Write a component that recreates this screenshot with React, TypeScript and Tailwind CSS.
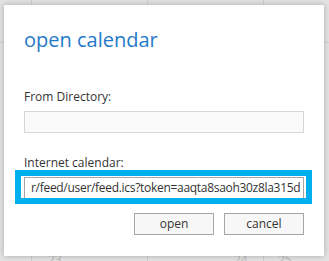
const days = [
  { w: 'w-[31px]', n: '', pad: 'pl-0' },
  { w: 'w-[116px]', n: '23', pad: 'pl-[16px]' },
  { w: 'w-[116px]', n: '24', pad: 'pl-[86px]' },
  { w: 'flex-1', n: '25', pad: 'pl-[14px]' },
];

export default function App() {
  return (
    <div className="relative w-[329px] h-[261px] overflow-hidden bg-[#e3e3e3] font-['Open_Sans',sans-serif]">
      {/* calendar behind the dialog */}
      <div className="flex flex-col h-full">
        <div className="h-[43px] border-b border-[#d2d2d2] flex">
          {days.map((d, i) => (
            <div key={i} className={`${d.w} h-full ${i > 0 ? 'border-l border-[#cfcfcf]' : ''}`} />
          ))}
        </div>
        <div className="flex-1 flex">
          {days.map((d, i) => (
            <div key={i} className={`${d.w} h-full flex flex-col justify-end ${d.pad} ${i > 0 ? 'border-l border-[#cfcfcf]' : ''}`}>
              <span className="text-[12px] leading-[12px] text-[#b8b8b8] translate-y-[5px]">{d.n}</span>
            </div>
          ))}
        </div>
      </div>

      <div className="absolute left-[4px] top-[5px] w-[320px] h-[251px] bg-white shadow-[0_0_6px_rgba(0,0,0,0.25)] px-5 pt-[21px]">
        <h1 className="text-[20px] leading-[28px] text-[#1f7ac9] font-normal">open calendar</h1>

        <div className="mt-[34px] text-[12px] leading-[18px] text-[#333]">From Directory:</div>
        <div className="mt-[5px] h-[22px] w-[280px] border border-[#d6d6d6] bg-[#fafafa]" />

        <div className="mt-[21px] text-[12px] leading-[18px] text-[#333]">Internet calendar:</div>
        <div className="relative mt-[5px]">
          <div className="h-[22px] w-[280px] border border-[#a6a6a6] bg-white pl-[6px] text-[12px] leading-[20px] tracking-[-0.3px] text-[#333] whitespace-nowrap overflow-hidden">
            r/feed/user/feed.ics?token=aaqta8saoh30z8la315d
          </div>
          <div className="absolute left-[-9px] top-[-7px] w-[297px] h-[34px] border-[6px] border-[#00b0ee]" />
        </div>

        <div className="mt-[14px] flex justify-end gap-[10px] w-[280px]">
          <button className="h-[22px] w-[80px] border border-[#a6a6a6] bg-[#f7f7f7] text-[12px] leading-[20px] text-[#333]">open</button>
          <button className="h-[22px] w-[80px] border border-[#a6a6a6] bg-[#f7f7f7] text-[12px] leading-[20px] text-[#333]">cancel</button>
        </div>
      </div>
    </div>
  );
}
